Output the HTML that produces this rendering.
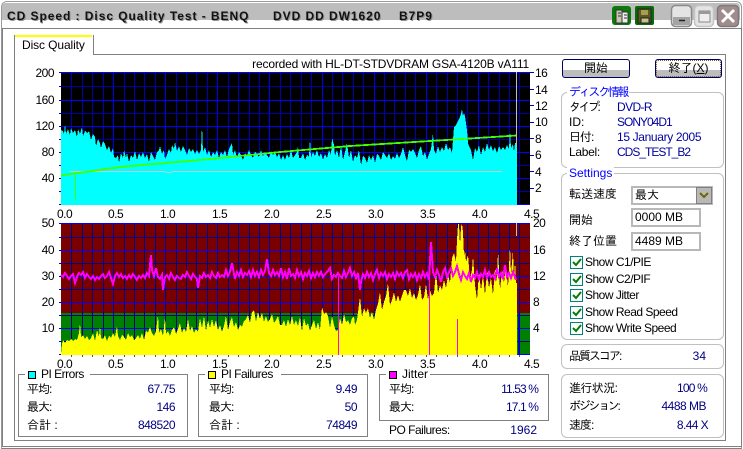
<!DOCTYPE html>
<html lang="ja"><head><meta charset="utf-8"><title>CD Speed</title>
<style>
html,body{margin:0;padding:0;background:#fff}
#w{position:relative;width:743px;height:449px;overflow:hidden;background:#fff;font:12px/14px "Liberation Sans","IPAGothic","Noto Sans CJK JP",sans-serif;color:#000}
#w div,#w span.t{position:absolute}
.t{white-space:pre;height:14px}
.v{color:#000080}
.a{color:#0000a0;letter-spacing:-.6px}
.s{letter-spacing:-.5px}
.j{letter-spacing:-1px}
.g{border:1px solid #c0c0c0;border-radius:6px}
.b{border:1px solid #808080}
.n{letter-spacing:-.5px}
.h{background:#fff;color:#00f;padding:0 2px}
.tt{font:bold 12px/14px "Liberation Sans",sans-serif;color:#111;letter-spacing:.95px;text-shadow:1px 1px 0 #8f8f8f}
.box{background:#fff;border:2px solid #b8b8b8;box-sizing:border-box;padding-left:2px;line-height:14px}
.cb{width:11px;height:11px;border:1px solid #008080;background:#fff;left:570px}
.btn{border:1px solid #000060;border-radius:3px;box-sizing:border-box;background:linear-gradient(#fff 0,#fff 58%,#bdbdbd 58%);text-align:center;line-height:16px}
.lg{width:6px;height:6px;border:1px solid #000}
</style></head><body><div id="w">

<!-- window frame -->
<div style="left:1px;top:1px;width:739px;height:446px;border:1px solid #9a9a9a;border-radius:6px 6px 0 0;border-bottom:1px solid #808080"></div>
<div style="left:2px;top:3px;width:738px;height:17px;background:#bdbdbd;border-radius:4px 4px 0 0"></div>
<div style="left:2px;top:28px;width:738px;height:417px;border:1px solid #808080"></div>
<span class="t tt" style="left:7px;top:9px">CD Speed : Disc Quality Test - BENQ</span>
<span class="t tt" style="left:273px;top:9px">DVD DD DW1620</span>
<span class="t tt" style="left:399px;top:9px">B7P9</span>

<!-- title icons -->
<svg style="position:absolute;left:610px;top:4px" width="131" height="24" viewBox="610 4 131 24">
<rect x="612" y="6" width="19" height="19" rx="3" fill="#0a7a0a"/>
<path d="M616 10h6v13h-6z" fill="#c8c8b0" stroke="#333"/><path d="M622 12h6v11h-6z" fill="#eee" stroke="#333"/>
<path d="M618 13h3M618 16h3M624 15h3M624 18h3" stroke="#333"/>
<rect x="635" y="6" width="19" height="19" rx="2" fill="#0a6a0a"/>
<path d="M638 9h13v14h-13z" fill="#5a5a20" stroke="#222"/><path d="M641 10h7v5h-7z" fill="#a89c50"/><path d="M641 18h8v5h-8z" fill="#c8c090" stroke="#222"/>
<rect x="671.500" y="5.500" width="20" height="21" rx="4" fill="#e4e4e4" stroke="#8a8a8a" stroke-width="1.500"/>
<path d="M673 17h17v7q0 1-2 1h-13q-2 0-2-1z" fill="#a4a4a4"/>
<path d="M679 20.500h6" stroke="#222" stroke-width="1.500"/>
<rect x="694.500" y="5.500" width="19" height="21" rx="4" fill="#e4e4e4" stroke="#c4c4c4" stroke-width="1.500"/>
<path d="M699 11h11v11h-11z" fill="#eee" stroke="#8a8a8a"/><path d="M699 11h11v3h-11z" fill="#9a9a9a"/>
<rect x="717.500" y="5.500" width="21" height="21" rx="4" fill="#a08c8c" stroke="#7a7a7a" stroke-width="1.500"/>
<path d="M722 10l12 12M734 10l-12 12" stroke="#fff" stroke-width="3"/>
</svg>

<!-- tab + panel -->
<div style="left:14px;top:54px;width:710px;height:385px;border:1px solid #808080"></div>
<div style="left:14px;top:35px;width:78px;height:20px;border:1px solid #808080;border-top:0;border-bottom:0;background:#fff"></div>
<div style="left:15px;top:35px;width:77px;height:2px;background:#ffff00"></div>
<span class="t" style="left:22px;top:38px;letter-spacing:-.1px">Disc Quality</span>
<div style="left:15px;top:54px;width:77px;height:2px;background:#fff"></div>

<span class="t" style="right:214px;top:57px;letter-spacing:-.17px">recorded with HL-DT-STDVDRAM GSA-4120B vA111</span>

<!-- charts -->
<svg style="position:absolute;left:0;top:0" width="743" height="449" viewBox="0 0 743 449">
<defs>
<path id="vm" d="M71.500 0v132M82.500 0v132M92.500 0v132M103.500 0v132M124.500 0v132M134.500 0v132M144.500 0v132M155.500 0v132M176.500 0v132M186.500 0v132M196.500 0v132M207.500 0v132M228.500 0v132M238.500 0v132M249.500 0v132M259.500 0v132M280.500 0v132M290.500 0v132M301.500 0v132M311.500 0v132M332.500 0v132M342.500 0v132M353.500 0v132M363.500 0v132M384.500 0v132M394.500 0v132M405.500 0v132M415.500 0v132M436.500 0v132M447.500 0v132M457.500 0v132M467.500 0v132M488.500 0v132M499.500 0v132M509.500 0v132M519.500 0v132"/>
<path id="vj" d="M113.500 0v132M165.500 0v132M217.500 0v132M269.500 0v132M322.500 0v132M374.500 0v132M426.500 0v132M478.500 0v132"/>
</defs>

<!-- top plot -->
<rect x="61" y="72" width="469" height="133" fill="#000"/>
<use href="#vm" y="72" stroke="#0000b0"/>
<use href="#vj" y="72" stroke="#0000f0"/>
<path d="M61 86.500h469M61 113.500h469M61 139.500h469M61 165.500h469M61 191.500h469" stroke="#0000a0"/>
<path d="M61 72.500h469M61 100.500h469M61 126.500h469M61 152.500h469M61 178.500h469M61 204.500h469" stroke="#0000ff"/>
<path d="M59 72.500h2M59 86.500h2M59 100.500h2M59 113.500h2M59 126.500h2M59 139.500h2M59 152.500h2M59 165.500h2M59 178.500h2M59 191.500h2M59 204.500h2" stroke="#0000c0"/>
<path d="M530 72.500h4M530 89.500h4M530 105.500h4M530 122.500h4M530 138.500h4M530 155.500h4M530 171.500h4M530 188.500h4" stroke="#0000c0"/>
<polygon shape-rendering="crispEdges" fill="#00ffff" points="61,205 61,130 63,131 64,134 65,124 66,134 68,129 70,135 71,128 73,133 75,130 77,137 78,129 80,134 82,127 83,136 85,131 87,133 89,131 91,140 93,134 95,137 96,146 98,139 100,143 101,148 103,141 105,144 107,150 109,146 111,153 113,148 114,157 116,158 118,155 119,163 121,153 123,158 124,150 126,158 127,153 129,162 131,155 133,158 135,151 137,160 139,153 141,157 143,152 145,158 147,154 149,162 151,152 153,156 155,160 157,152 159,150 160,146 162,154 164,150 165,159 167,155 169,149 171,153 172,145 174,149 175,142 177,151 179,146 181,152 183,146 185,150 187,155 189,148 191,152 193,149 195,154 197,150 199,154 201,150 202,125 203,152 205,147 207,155 209,150 211,157 213,152 215,155 217,150 219,158 221,152 223,155 225,150 227,157 229,149 232,143 233,155 235,150 237,158 239,152 241,155 243,160 245,153 247,156 249,150 251,155 253,158 255,152 257,154 259,157 261,150 263,156 265,152 267,155 269,158 271,151 273,155 275,152 277,157 279,153 281,160 283,155 285,160 287,154 289,158 291,150 293,158 295,155 297,152 298,146 299,158 301,158 303,153 305,160 307,155 309,157 310,138 311,158 313,152 315,156 317,150 319,157 321,153 323,160 325,154 327,158 329,150 331,155 332,138 334,145 335,156 337,150 339,158 341,145 343,160 345,152 347,143 349,158 351,150 353,162 355,155 357,158 359,150 361,165 363,156 365,158 367,163 369,155 371,160 373,155 375,163 377,154 379,156 381,160 383,152 385,155 387,158 389,153 391,160 393,156 395,159 397,153 399,158 401,154 403,147 405,155 407,161 409,150 411,152 413,149 415,153 417,158 419,150 421,146 423,156 425,152 427,160 429,154 431,149 433,133 434,150 436,154 438,146 440,152 442,147 444,151 446,143 448,150 450,147 452,153 454,127 456,125 458,121 460,117 461,114 462,109 463,116 464,113 465,116 466,123 467,130 468,143 469,146 471,150 473,160 475,148 477,152 479,145 481,155 483,147 485,152 487,143 489,150 491,145 493,151 495,147 497,153 499,146 501,150 503,147 505,150 507,145 509,149 510,129 511,148 513,144 514,152 515,143 517,143 517,205"/>
<path d="M70 171.500h94l5 1.500 4-1.500h329" stroke="#c8c8c8" fill="none"/>
<polyline fill="none" stroke="#40ff00" stroke-width="1.800" shape-rendering="crispEdges" points="61,175.500 120,167 200,160 280,152 350,146 430,141 517,135.500"/>
<path d="M75.500 172v29" stroke="#40ff00"/>
<path d="M516.500 72v75" stroke="#c0c0c0"/>

<!-- bottom plot -->
<rect x="61" y="223" width="469" height="132" fill="#7a0000"/>
<rect x="61" y="313" width="469" height="42" fill="#008000"/>
<use href="#vm" y="223" stroke="#000090"/>
<use href="#vj" y="223" stroke="#0000b0"/>
<path d="M61 237.500h469M61 263.500h469M61 289.500h469M61 315.500h469M61 341.500h469" stroke="#000090"/>
<path d="M61 223.500h469M61 250.500h469M61 276.500h469M61 302.500h469M61 328.500h469M61 354.500h469" stroke="#0000ff"/>
<path d="M518.500 313v42" stroke="#0000ff"/>
<path d="M59 223.500h2M59 237.500h2M59 250.500h2M59 263.500h2M59 276.500h2M59 289.500h2M59 302.500h2M59 315.500h2M59 328.500h2M59 341.500h2M59 354.500h2" stroke="#0000c0"/>
<polygon shape-rendering="crispEdges" fill="#ffff00" points="61,355 61,354 62,344 63,340 65,343 67,340 69,341 71,339 73,341 75,339 77,340 79,333 80,323 81,337 83,335 85,339 87,336 89,340 91,338 93,333 95,341 97,330 99,337 100,326 101,338 103,339 105,335 107,341 109,336 111,338 113,333 115,337 117,326 118,336 120,340 122,335 124,337 126,340 128,333 130,337 132,335 134,340 136,338 138,335 140,339 142,333 144,340 146,331 148,333 150,327 152,333 154,336 156,331 158,315 159,333 161,329 163,336 165,317 166,334 168,331 170,336 172,330 174,327 176,334 178,329 180,323 182,333 184,328 186,332 188,319 190,331 192,326 194,333 196,329 198,332 200,318 202,328 204,316 206,331 208,320 210,328 212,319 214,327 216,320 218,330 220,325 222,332 224,326 226,316 228,330 230,322 232,317 234,327 236,322 238,330 240,325 242,327 244,321 246,319 248,315 250,323 252,312 254,310 256,322 258,312 260,319 262,313 264,322 266,316 268,322 270,319 272,314 274,323 276,320 278,316 280,325 282,325 284,320 286,327 288,319 290,325 292,316 294,325 296,320 298,326 300,317 302,331 304,318 306,326 308,323 310,331 312,325 314,320 316,329 318,322 320,330 322,307 324,314 326,312 328,316 330,328 332,316 334,325 336,331 338,330 340,318 342,325 344,314 346,322 348,320 350,325 352,318 354,316 355,325 357,320 360,297 362,317 364,308 366,313 368,308 370,318 372,312 374,320 376,310 378,304 380,292 382,310 384,302 386,296 388,283 390,305 392,300 394,292 396,302 398,295 400,302 402,296 404,290 406,290 408,296 410,288 412,298 414,293 416,300 418,295 420,284 422,300 424,297 426,284 428,300 430,290 432,296 434,293 436,272 438,293 440,285 442,290 444,280 446,288 448,275 450,283 452,258 454,253 456,262 457,240 458,224 459,224 460,245 461,227 462,224 463,232 464,256 465,250 466,262 468,255 470,280 472,270 473,256 475,285 477,300 479,272 481,290 483,275 485,295 487,270 489,288 491,278 493,295 495,268 497,282 498,250 500,290 502,270 504,283 506,265 508,288 510,245 511,275 513,250 514,285 515,260 516,283 517,283 517,355"/>
<polyline fill="none" stroke="#ff00ff" stroke-width="2" shape-rendering="crispEdges" points="61,275 63,277 65,273 67,276 69,279 71,276 73,274 75,283 77,277 79,273 81,275 83,272 85,278 87,274 89,277 91,279 93,276 95,280 97,277 99,279 101,276 103,274 105,278 107,276 109,272 111,278 113,284 115,276 117,273 119,277 121,274 123,278 125,276 127,279 129,275 131,278 133,274 135,277 137,280 139,276 141,278 143,275 145,278 147,273 149,276 151,255 152,270 154,276 156,268 158,277 160,279 162,275 163,290 165,277 167,275 169,279 171,273 173,277 175,280 177,276 179,278 181,279 183,275 185,277 187,272 189,276 191,279 193,274 195,277 197,279 198,288 200,276 202,278 204,273 206,277 208,275 210,278 212,272 214,276 216,278 218,273 220,277 222,275 224,277 226,270 228,276 230,272 232,263 234,274 235,279 237,272 239,276 241,270 243,277 245,273 247,275 249,271 251,277 253,270 255,276 257,272 259,277 261,270 263,275 265,271 267,259 269,273 271,276 273,270 275,275 277,272 279,276 281,268 283,277 285,272 287,279 289,268 291,276 293,274 295,278 297,270 299,276 301,272 303,279 305,273 307,276 309,271 311,278 313,273 315,277 317,272 319,276 321,272 323,277 325,274 327,272 330,268 332,279 334,275 336,277 338,273 340,276 342,278 344,271 346,277 348,273 350,268 352,276 354,272 356,278 358,273 360,290 361,282 363,274 365,278 367,272 369,277 371,273 373,280 375,274 377,270 379,278 381,273 383,276 385,272 387,279 389,274 391,277 393,273 395,279 397,272 399,276 401,273 403,278 405,272 407,270 409,279 411,274 413,277 415,273 417,280 419,274 421,278 423,272 425,277 427,273 429,280 431,242 433,272 435,277 437,270 439,275 441,282 443,272 445,268 447,277 449,272 451,268 453,276 455,272 457,266 459,274 461,280 463,272 465,276 467,279 469,273 471,282 473,275 475,278 477,272 479,279 481,274 483,277 485,270 487,278 489,272 491,277 493,275 495,279 497,268 499,277 501,273 503,279 505,265 507,277 509,273 511,278 513,272 515,277 516,280"/>
<path d="M338.500 276v79M429.500 280v75M457.500 319v36" stroke="#ff00ff" stroke-width="1"/>
<path d="M516.500 223v13" stroke="#c0c0c0"/>
<path d="M71.500 355v2M82.500 355v2M92.500 355v2M103.500 355v2M113.500 355v2M124.500 355v2M134.500 355v2M144.500 355v2M155.500 355v2M165.500 355v2M176.500 355v2M186.500 355v2M196.500 355v2M207.500 355v2M217.500 355v2M228.500 355v2M238.500 355v2M249.500 355v2M259.500 355v2M269.500 355v2M280.500 355v2M290.500 355v2M301.500 355v2M311.500 355v2M322.500 355v2M332.500 355v2M342.500 355v2M353.500 355v2M363.500 355v2M374.500 355v2M384.500 355v2M394.500 355v2M405.500 355v2M415.500 355v2M426.500 355v2M436.500 355v2M447.500 355v2M457.500 355v2M467.500 355v2M478.500 355v2M488.500 355v2M499.500 355v2M509.500 355v2M519.500 355v2" stroke="#555"/>
</svg>

<!-- top chart labels -->
<span class="t n" style="right:689px;top:66px">200</span>
<span class="t n" style="right:689px;top:93px">160</span>
<span class="t n" style="right:689px;top:119px">120</span>
<span class="t n" style="right:689px;top:145px">80</span>
<span class="t n" style="right:689px;top:171px">40</span>
<span class="t n" style="left:535px;top:66px">16</span>
<span class="t n" style="left:535px;top:83px">14</span>
<span class="t n" style="left:535px;top:99px">12</span>
<span class="t n" style="left:535px;top:115px">10</span>
<span class="t n" style="left:535px;top:132px">8</span>
<span class="t n" style="left:535px;top:148px">6</span>
<span class="t n" style="left:535px;top:165px">4</span>
<span class="t n" style="left:535px;top:181px">2</span>

<span class="t n" style="left:57px;top:207px">0.0</span><span class="t n" style="left:108px;top:207px">0.5</span><span class="t n" style="left:160px;top:207px">1.0</span><span class="t n" style="left:212px;top:207px">1.5</span><span class="t n" style="left:264px;top:207px">2.0</span><span class="t n" style="left:316px;top:207px">2.5</span><span class="t n" style="left:368px;top:207px">3.0</span><span class="t n" style="left:420px;top:207px">3.5</span><span class="t n" style="left:472px;top:207px">4.0</span><span class="t n" style="left:524px;top:207px">4.5</span>

<!-- bottom chart labels -->
<span class="t n" style="right:689px;top:216px">50</span>
<span class="t n" style="right:689px;top:243px">40</span>
<span class="t n" style="right:689px;top:269px">30</span>
<span class="t n" style="right:689px;top:295px">20</span>
<span class="t n" style="right:689px;top:321px">10</span>
<span class="t n" style="left:533px;top:216px">20</span>
<span class="t n" style="left:533px;top:243px">16</span>
<span class="t n" style="left:533px;top:269px">12</span>
<span class="t n" style="left:533px;top:295px">8</span>
<span class="t n" style="left:533px;top:321px">4</span>

<span class="t n" style="left:57px;top:357px">0.0</span><span class="t n" style="left:108px;top:357px">0.5</span><span class="t n" style="left:160px;top:357px">1.0</span><span class="t n" style="left:212px;top:357px">1.5</span><span class="t n" style="left:264px;top:357px">2.0</span><span class="t n" style="left:316px;top:357px">2.5</span><span class="t n" style="left:368px;top:357px">3.0</span><span class="t n" style="left:420px;top:357px">3.5</span><span class="t n" style="left:472px;top:357px">4.0</span><span class="t n" style="left:524px;top:357px">4.5</span>

<!-- PI Errors -->
<div class="b" style="left:18px;top:374px;width:168px;height:61px"></div>
<div style="left:25px;top:370px;width:65px;height:8px;background:#fff"></div>
<div class="lg" style="left:28px;top:371px;background:#00ffff"></div>
<span class="t s" style="left:41px;top:367px">PI Errors</span>
<span class="t j" style="left:27px;top:382px">平均:</span><span class="t v n" style="right:568px;top:382px">67.75</span>
<span class="t j" style="left:27px;top:400px">最大:</span><span class="t v n" style="right:568px;top:400px">146</span>
<span class="t" style="left:27px;top:418px">合計 :</span><span class="t v n" style="right:568px;top:418px">848520</span>

<!-- PI Failures -->
<div class="b" style="left:198px;top:374px;width:168px;height:61px"></div>
<div style="left:205px;top:370px;width:76px;height:8px;background:#fff"></div>
<div class="lg" style="left:208px;top:371px;background:#ffff00"></div>
<span class="t s" style="left:221px;top:367px">PI Failures</span>
<span class="t j" style="left:209px;top:382px">平均:</span><span class="t v n" style="right:386px;top:382px">9.49</span>
<span class="t j" style="left:209px;top:400px">最大:</span><span class="t v n" style="right:386px;top:400px">50</span>
<span class="t" style="left:209px;top:418px">合計 :</span><span class="t v n" style="right:386px;top:418px">74849</span>

<!-- Jitter -->
<div class="b" style="left:379px;top:374px;width:168px;height:45px"></div>
<div style="left:386px;top:370px;width:44px;height:8px;background:#fff"></div>
<div class="lg" style="left:389px;top:371px;background:#ff00ff"></div>
<span class="t" style="left:402px;top:367px">Jitter</span>
<span class="t j" style="left:389px;top:382px">平均:</span><span class="t v" style="right:205px;top:382px;letter-spacing:-.9px">11.53 %</span>
<span class="t j" style="left:389px;top:400px">最大:</span><span class="t v" style="right:205px;top:400px;letter-spacing:-.9px">17.1 %</span>
<span class="t s" style="left:389px;top:423px">PO Failures:</span><span class="t v" style="right:206px;top:423px">1962</span>

<!-- buttons -->
<div class="btn" style="left:562px;top:59px;width:68px;height:19px">開始</div>
<div class="btn" style="left:655px;top:59px;width:67px;height:19px;outline:1px dotted #7a5a40;outline-offset:-2px">終了(<u>X</u>)</div>

<!-- disc info -->
<div class="g" style="left:561px;top:92px;width:161px;height:74px"></div>
<span class="t h" style="left:567px;top:85px;letter-spacing:-2.300px">ディスク情報</span>
<span class="t" style="left:569px;top:100px;letter-spacing:-2.500px">タイプ:</span><span class="t a" style="left:617px;top:100px">DVD-R</span>
<span class="t" style="left:569px;top:115px">ID:</span><span class="t a" style="left:617px;top:115px;letter-spacing:-1px">SONY04D1</span>
<span class="t j" style="left:569px;top:130px">日付:</span><span class="t a" style="left:617px;top:130px;letter-spacing:-.35px">15 January 2005</span>
<span class="t" style="left:569px;top:145px;letter-spacing:-.3px">Label:</span><span class="t a" style="left:617px;top:145px;letter-spacing:-1px">CDS_TEST_B2</span>

<!-- settings -->
<div class="g" style="left:561px;top:173px;width:161px;height:165px"></div>
<span class="t h" style="left:567px;top:166px">Settings</span>
<span class="t" style="left:569px;top:187px">転送速度</span>
<div class="box" style="left:631px;top:186px;width:82px;height:19px">最大</div>
<div style="left:696px;top:187px;width:16px;height:17px;background:#b8b8b8;border:1px solid #808080;box-sizing:border-box"></div>
<svg style="position:absolute;left:698px;top:191px" width="12" height="9"><path d="M2 2l4 4 4-4" fill="none" stroke="#6a6a00" stroke-width="2"/></svg>
<span class="t" style="left:569px;top:213px">開始</span>
<div class="box" style="left:631px;top:208px;width:70px;height:19px">0000 MB</div>
<span class="t" style="left:569px;top:234px">終了位置</span>
<div class="box" style="left:631px;top:232px;width:70px;height:19px">4489 MB</div>
<div class="cb" style="top:256px"></div><div class="cb" style="top:273px"></div><div class="cb" style="top:289px"></div><div class="cb" style="top:306px"></div><div class="cb" style="top:322px"></div>
<svg style="position:absolute;left:0;top:0" width="743" height="449" viewBox="0 0 743 449"><path d="M573 262l3 3 5-6M573 279l3 3 5-6M573 295l3 3 5-6M573 312l3 3 5-6M573 328l3 3 5-6" fill="none" stroke="#008000" stroke-width="2"/></svg>
<span class="t s" style="left:585px;top:255px">Show C1/PIE</span>
<span class="t s" style="left:585px;top:272px">Show C2/PIF</span>
<span class="t s" style="left:585px;top:288px">Show Jitter</span>
<span class="t s" style="left:585px;top:305px">Show Read Speed</span>
<span class="t s" style="left:585px;top:321px">Show Write Speed</span>

<!-- score -->
<div class="g" style="left:561px;top:344px;width:161px;height:23px"></div>
<span class="t" style="left:569px;top:349px;letter-spacing:-2px">品質スコア:</span><span class="t v" style="right:37px;top:349px">34</span>

<!-- progress -->
<div class="g" style="left:561px;top:374px;width:161px;height:62px"></div>
<span class="t" style="left:569px;top:381px;letter-spacing:-.6px">進行状況:</span><span class="t v" style="right:36px;top:381px;letter-spacing:-.8px">100 %</span>
<span class="t" style="left:569px;top:399px;letter-spacing:-2.300px">ボジション:</span><span class="t v" style="right:37px;top:399px;letter-spacing:-.5px">4488 MB</span>
<span class="t j" style="left:569px;top:418px">速度:</span><span class="t v" style="right:35px;top:418px;letter-spacing:-.6px">8.44 X</span>

</div></body></html>
